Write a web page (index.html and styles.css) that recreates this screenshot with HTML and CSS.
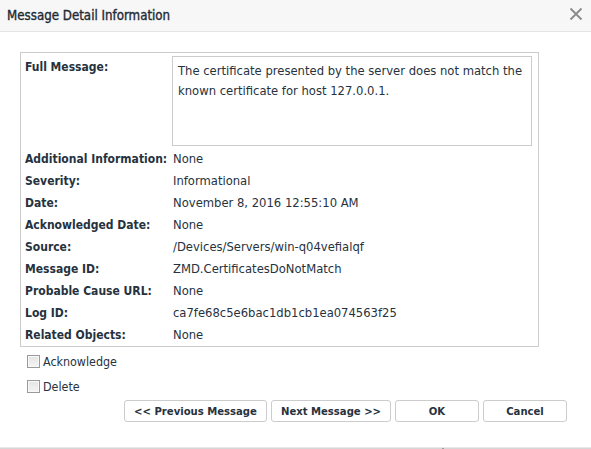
FILE: index.html
```html
<!DOCTYPE html>
<html>
<head>
<meta charset="utf-8">
<link rel="stylesheet" href="styles.css">
</head>
<body>
<div class="dialog">
  <div class="header">
    <span class="title">Message Detail Information</span>
    <svg class="close" width="14" height="14" viewBox="0 0 14 14"><path d="M1.5 1.5L12.5 12.5M12.5 1.5L1.5 12.5" stroke="#8a8a8a" stroke-width="1.8"/></svg>
  </div>
  <div class="body">
    <div class="panel">
      <div class="label">Full Message:</div>
      <div class="message">The certificate presented by the server does not match the known certificate for host 127.0.0.1.</div>
      <div class="label">Additional Information:</div><div class="value">None</div>
      <div class="label">Severity:</div><div class="value">Informational</div>
      <div class="label">Date:</div><div class="value">November 8, 2016 12:55:10 AM</div>
      <div class="label">Acknowledged Date:</div><div class="value">None</div>
      <div class="label">Source:</div><div class="value">/Devices/Servers/win-q04vefialqf</div>
      <div class="label">Message ID:</div><div class="value">ZMD.CertificatesDoNotMatch</div>
      <div class="label">Probable Cause URL:</div><div class="value">None</div>
      <div class="label">Log ID:</div><div class="value">ca7fe68c5e6bac1db1cb1ea074563f25</div>
      <div class="label">Related Objects:</div><div class="value">None</div>
    </div>
    <div class="checks">
      <label class="check"><span class="box"></span>Acknowledge</label>
      <label class="check"><span class="box"></span>Delete</label>
    </div>
    <div class="buttons">
      <button class="btn btn-prev">&lt;&lt; Previous Message</button>
      <button class="btn btn-next">Next Message &gt;&gt;</button>
      <button class="btn btn-ok">OK</button>
      <button class="btn btn-cancel">Cancel</button>
    </div>
  </div>
  <div class="footer"><span class="grip"></span></div>
</div>
</body>
</html>
```
FILE: styles.css
```css
html, body {
  margin: 0;
  padding: 0;
  background: #ffffff;
}
body {
  font-family: "DejaVu Sans Condensed", "DejaVu Sans", sans-serif;
  font-size: 12px;
  color: #26323e;
}
.dialog {
  display: flex;
  flex-direction: column;
  height: 449px;
}
.header {
  height: 31px;
  background: #f7f7f7;
  border-bottom: 1px solid #e4e4e4;
  display: flex;
  align-items: center;
  justify-content: space-between;
  padding: 0 8px 0 7px;
}
.title {
  font-family: "DejaVu Sans Condensed", "DejaVu Sans", sans-serif;
  font-size: 13.2px;
  font-weight: normal;
  color: #1f2a36;
  -webkit-text-stroke: 0.35px #1f2a36;
}
.close {
  display: block;
  margin-top: -4px;
}
.body {
  padding: 20px 0 0 20px;
}
.panel {
  border: 1px solid #cccccc;
  display: grid;
  grid-template-columns: 147px 360px;
  padding: 3px 0 0 4px;
  width: 513px;
}
.label {
  font-weight: bold;
  line-height: 22px;
  height: 22px;
  white-space: nowrap;
}
.value {
  font-family: "DejaVu Sans", sans-serif;
  font-size: 11.6px;
  line-height: 22px;
  height: 22px;
  padding-left: 1px;
  white-space: nowrap;
}
.message {
  font-family: "DejaVu Sans", sans-serif;
  font-size: 11.6px;
  border: 1px solid #cccccc;
  padding: 4px 2px 4px 5px;
  box-sizing: border-box;
  height: 90px;
  line-height: 20px;
  margin-bottom: 2px;
}
.checks {
  display: flex;
  flex-direction: column;
  gap: 7px;
  margin-top: 5px;
  padding-left: 7px;
  font-size: 12.4px;
}
.check {
  display: flex;
  align-items: center;
  gap: 3px;
  height: 18px;
}
.box {
  width: 11px;
  height: 11px;
  border: 1px solid #9a9a9a;
  background: linear-gradient(#e4e4e4, #f4f4f4);
  box-shadow: inset 0 0 0 1px #f8f8f8;
}
.buttons {
  display: flex;
  gap: 4px;
  margin-top: 5px;
  padding-left: 104px;
}
.btn {
  height: 22px;
  border: 1px solid #cccccc;
  border-radius: 3px;
  background: #ffffff;
  font-family: "DejaVu Sans Condensed", "DejaVu Sans", sans-serif;
  font-size: 11.2px;
  font-weight: bold;
  color: #26323e;
  padding: 0;
}
.btn-prev { width: 143px; }
.btn-next { width: 120px; }
.btn-ok { width: 84px; }
.btn-cancel { width: 84px; }
.footer {
  margin-top: auto;
  height: 1px;
  border-top: 1px solid #e8e8e8;
  background: #d6d6d6;
  position: relative;
}
.grip {
  position: absolute;
  left: 442px;
  top: 0;
  width: 2px;
  height: 1px;
  background: #9a9a9a;
}
```
